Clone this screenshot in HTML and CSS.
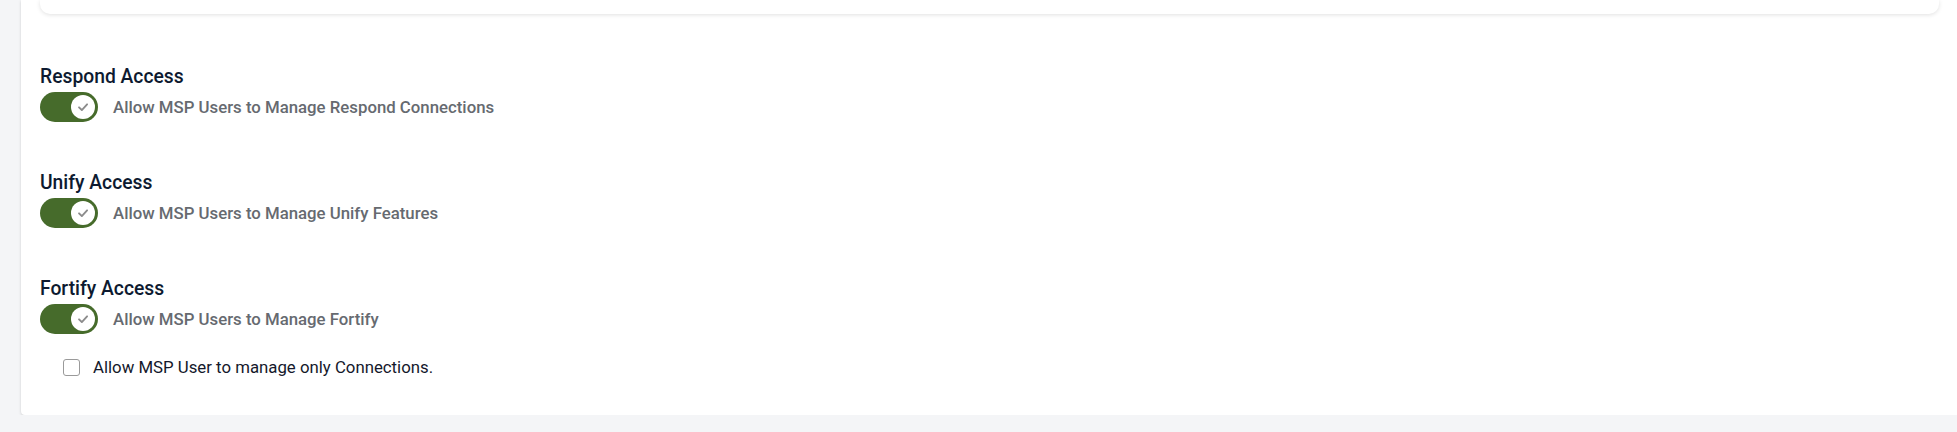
FILE: index.html
```html
<!DOCTYPE html>
<html lang="en">
<head>
    <meta charset="UTF-8">
    <meta name="viewport" content="width=device-width, initial-scale=1.0">
    <title>MSP Access Settings</title>
    <link rel="stylesheet" href="styles.css">
</head>
<body>
    <div class="panel">
        <div class="top-card"></div>

        <div class="access-section first">
            <h3>Respond Access</h3>
            <label class="switch-row">
                <span class="switch on"><span class="knob"><svg viewBox="0 0 12 12" width="14" height="14"><path d="M2.6 6.3 L5 8.6 L9.5 3.7" fill="none" stroke="#8c8c8c" stroke-width="1.6" stroke-linecap="round" stroke-linejoin="round"/></svg></span></span>
                <span class="switch-label">Allow MSP Users to Manage Respond Connections</span>
            </label>
        </div>

        <div class="access-section">
            <h3>Unify Access</h3>
            <label class="switch-row">
                <span class="switch on"><span class="knob"><svg viewBox="0 0 12 12" width="14" height="14"><path d="M2.6 6.3 L5 8.6 L9.5 3.7" fill="none" stroke="#8c8c8c" stroke-width="1.6" stroke-linecap="round" stroke-linejoin="round"/></svg></span></span>
                <span class="switch-label">Allow MSP Users to Manage Unify Features</span>
            </label>
        </div>

        <div class="access-section">
            <h3>Fortify Access</h3>
            <label class="switch-row">
                <span class="switch on"><span class="knob"><svg viewBox="0 0 12 12" width="14" height="14"><path d="M2.6 6.3 L5 8.6 L9.5 3.7" fill="none" stroke="#8c8c8c" stroke-width="1.6" stroke-linecap="round" stroke-linejoin="round"/></svg></span></span>
                <span class="switch-label">Allow MSP Users to Manage Fortify</span>
            </label>
            <label class="check-row">
                <span class="checkbox"></span>
                <span class="check-label">Allow MSP User to manage only Connections.</span>
            </label>
        </div>
    </div>
</body>
</html>
```

FILE: styles.css
```css
body {
    margin: 0;
    background-color: #f4f5f7;
    font-family: Roboto, "Liberation Sans", Arial, sans-serif;
}
.panel {
    margin-left: 21px;
    padding: 0 18px 38px 19px;
    background-color: #fff;
    border-radius: 0 0 0 4px;
    box-shadow: 0 1px 3px rgba(0, 0, 0, 0.16);
}
.top-card {
    height: 14px;
    background-color: #fff;
    border-radius: 0 0 10px 10px;
    box-shadow: 0 1px 4px rgba(0, 0, 0, 0.12);
}
.access-section {
    margin-top: 50px;
}
.access-section.first {
    margin-top: 52px;
}
.access-section h3 {
    margin: 0 0 4px;
    font-size: 19.3px;
    line-height: 22px;
    font-weight: 500;
    color: #0d1a30;
}
.switch-row {
    display: flex;
    align-items: center;
    gap: 15px;
}
.switch {
    width: 58px;
    height: 30px;
    border-radius: 15px;
    background-color: #466b2b;
    display: flex;
    align-items: center;
    justify-content: flex-end;
    padding-right: 3px;
    box-sizing: border-box;
}
.knob {
    width: 24px;
    height: 24px;
    border-radius: 50%;
    background-color: #fff;
    display: flex;
    align-items: center;
    justify-content: center;
}
.switch-label {
    font-size: 16.8px;
    line-height: 20px;
    font-weight: 500;
    color: #666a70;
}
.check-row {
    display: flex;
    align-items: center;
    gap: 13px;
    margin: 23px 0 0 23px;
}
.checkbox {
    width: 15px;
    height: 15px;
    border: 1px solid #9a9a9a;
    border-radius: 3px;
    background-color: #fff;
}
.check-label {
    font-size: 16.8px;
    line-height: 20px;
    color: #14182b;
}
```
